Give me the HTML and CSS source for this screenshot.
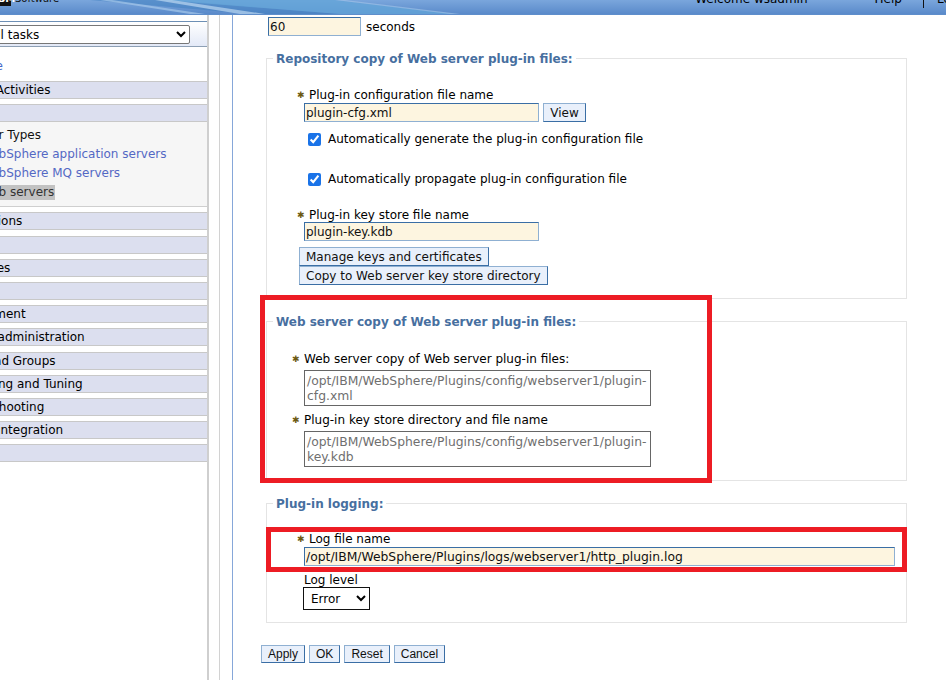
FILE: index.html
```html
<!DOCTYPE html>
<html lang="en">
<head>
<meta charset="utf-8">
<title>Web server plug-in properties</title>
<link rel="stylesheet" href="styles.css">
</head>
<body>
<header class="banner">
  <svg class="sweep" viewBox="0 0 946 15" preserveAspectRatio="none" aria-hidden="true">
    <polygon points="90,0 170,0 340,15 250,15" fill="#3f7fc0" opacity=".55"/>
    <polygon points="160,0 335,0 455,15 340,15" fill="#63a6d8" opacity=".75"/>
    <polygon points="100,0 112,0 205,15 190,15" fill="#a5c8ea" opacity=".7"/>
    <polygon points="155,0 172,0 265,15 240,15" fill="#b4d2ee" opacity=".75"/>
    <polygon points="335,0 345,0 460,15 450,15" fill="#a5c6ea" opacity=".6"/>
  </svg>
  <div class="brand"><span class="logo">IBM</span><span class="product">Software</span></div>
  <div class="user"><span class="welcome">Welcome wsadmin</span><span class="help">Help</span><span class="sep"></span><span class="logout">Logout</span></div>
</header>
<div class="page">
  <nav class="side">
    <div class="viewbar">
      <select class="taskselect"><option>All tasks</option></select>
    </div>
    <a class="welcome-link" href="#">Welcome</a>
    <div class="navrows">
      <div class="navrow">Guided Activities</div>
      <div class="navrow navrow-open">Servers</div>
      <div class="subnav">
        <div class="subhead">Server Types</div>
        <a href="#">WebSphere application servers</a>
        <a href="#">WebSphere MQ servers</a>
        <a href="#" class="current"><span>Web servers</span></a>
      </div>
      <div class="navrow">Applications</div>
      <div class="navrow">Services</div>
      <div class="navrow">Resources</div>
      <div class="navrow">Security</div>
      <div class="navrow">Environment</div>
      <div class="navrow">System administration</div>
      <div class="navrow">Users and Groups</div>
      <div class="navrow">Monitoring and Tuning</div>
      <div class="navrow">Troubleshooting</div>
      <div class="navrow">Service integration</div>
      <div class="navrow">UDDI</div>
    </div>
  </nav>
  <div class="rail"></div>
  <main class="content">
    <div class="timeout"><input class="field short" value="60"> <span>seconds</span></div>

    <fieldset class="group first">
      <legend>Repository copy of Web server plug-in files:</legend>
      <div class="label req">Plug-in configuration file name</div>
      <div class="inline"><input class="field wide" value="plugin-cfg.xml"><button class="btn view">View</button></div>
      <label class="check"><input type="checkbox" checked>Automatically generate the plug-in configuration file</label>
      <label class="check second"><input type="checkbox" checked>Automatically propagate plug-in configuration file</label>
      <div class="label req keylabel">Plug-in key store file name</div>
      <input class="field wide keyfield" value="plugin-key.kdb">
      <div class="stack">
        <button class="btn">Manage keys and certificates</button>
        <button class="btn">Copy to Web server key store directory</button>
      </div>
    </fieldset>

    <fieldset class="group webcopy">
      <legend>Web server copy of Web server plug-in files:</legend>
      <div class="label req">Web server copy of Web server plug-in files:</div>
      <div class="readonly">/opt/IBM/WebSphere/Plugins/config/webserver1/plugin-cfg.xml</div>
      <div class="label req rolabel">Plug-in key store directory and file name</div>
      <div class="readonly">/opt/IBM/WebSphere/Plugins/config/webserver1/plugin-key.kdb</div>
    </fieldset>

    <fieldset class="group logging">
      <legend>Plug-in logging:</legend>
      <div class="label req">Log file name</div>
      <input class="field full" value="/opt/IBM/WebSphere/Plugins/logs/webserver1/http_plugin.log">
      <div class="label levellabel">Log level</div>
      <select class="level"><option>Error</option></select>
    </fieldset>

    <div class="actions">
      <button class="btn">Apply</button>
      <button class="btn">OK</button>
      <button class="btn">Reset</button>
      <button class="btn">Cancel</button>
    </div>
  </main>
</div>
<div class="mark mark-copy"></div>
<div class="mark mark-log"></div>
</body>
</html>
```
FILE: styles.css
```css
* { box-sizing: border-box; }
html, body { height: 100%; }
body {
  margin: 0;
  overflow: hidden;
  background: #fff;
  color: #000;
  font: 12px "DejaVu Sans", sans-serif;
  position: relative;
}
.banner {
  height: 15px;
  position: relative;
  overflow: hidden;
  display: flex;
  justify-content: space-between;
  background: linear-gradient(#7aa6dc, #5a8aca);
  border-bottom: 1px solid #5f8ecb;
}
.sweep { position: absolute; inset: 0; width: 100%; height: 100%; }
.brand, .user {
  position: relative;
  display: flex;
  align-items: flex-end;
  height: 6px;
  line-height: 14px;
  white-space: nowrap;
}
.brand { margin-left: -8px; font-size: 10px; }
.logo {
  background: #111;
  color: #fff;
  font-weight: bold;
  width: 19px;
  height: 14px;
  flex: none;
  margin-right: 4px;
  padding-left: 2px;
}
.product { color: #111; }
.user { margin-right: -32px; }
.welcome { margin-right: 67px; }
.help { margin-right: 21px; }
.sep { width: 1px; height: 8px; background: #111; margin-right: 13px; margin-bottom: -2px; }
.page { display: flex; height: 665px; }
.side {
  width: 209px;
  flex: none;
  border-right: 2px solid #cfcfcf;
  overflow: hidden;
}
.viewbar {
  height: 26px;
  margin-top: 6px;
  border-top: 1px solid #6d8fb5;
  border-bottom: 1px solid #8ea0b5;
  background: linear-gradient(#fff, #e3e9f7);
  padding-top: 3px;
}
.taskselect {
  display: block;
  width: 210px;
  height: 19px;
  margin-left: -20px;
  padding: 0 0 0 4px;
  font: 12px "DejaVu Sans", sans-serif;
  background: #fff;
  border: 1px solid #777;
  border-radius: 2px;
}
.welcome-link {
  display: block;
  margin-left: -52px;
  height: 34px;
  padding-top: 12px;
  line-height: 15px;
  color: #4468c9;
  text-decoration: none;
}
.navrows { display: flex; flex-direction: column; gap: 5.2px; }
.navrow {
  height: 18px;
  margin-left: -51px;
  line-height: 16px;
  white-space: nowrap;
  background: #dcdfef;
  border-top: 1px solid #c8c8c8;
  border-bottom: 1px solid #c8c8c8;
}
.subnav {
  margin-top: -5.2px;
  height: 85px;
  padding-top: 4px;
  background: #f6f6f6;
  border-bottom: 1px solid #cfcfcf;
  display: flex;
  flex-direction: column;
  align-items: flex-start;
}
.subnav a, .subhead {
  height: 19px;
  line-height: 19px;
  white-space: nowrap;
  margin-left: -20px;
  text-decoration: none;
  color: #5468c4;
}
.subhead { margin-left: -36px; color: #111; }
.subnav .current { color: #333; }
.current span { background: #c2c2c2; display: block; height: 15px; line-height: 15px; margin-top: 2px; padding-right: 1px; }
.rail {
  width: 23px;
  flex: none;
  margin-left: 1px;
  border-right: 1px solid #86a7d9;
  position: relative;
}
.rail::before {
  content: "";
  position: absolute;
  left: 9px;
  top: 0;
  bottom: 0;
  width: 1px;
  background: #d2d2d2;
}
.content { width: 675px; flex: none; padding: 1px 0 0 33px; }
.timeout { height: 21px; padding-left: 2px; display: flex; align-items: center; gap: 5px; }
.field {
  height: 19px;
  padding: 0 1px;
  font: 12px "DejaVu Sans", sans-serif;
  color: #111;
  background: #fdf5e0;
  border: 1px solid;
  border-color: #3a6ea5 #8fb0d2 #8fb0d2 #3a6ea5;
  display: block;
}
.short { width: 93px; }
.wide { width: 235px; }
.keyfield { margin-top: -1px; }
.full { width: 591px; font-size: 12.35px; }
.group {
  margin: 0;
  padding: 0;
  width: 641px;
  border: 1px solid #e4e4e4;
  min-width: 0;
}
.group legend {
  margin-left: -31px;
  padding: 2px 3px 0;
  font-size: 12px;
  font-weight: bold;
  color: #476f9f;
  line-height: 15px;
}
.first { height: 249px; margin-top: 13px; padding: 21px 0 0 37px; }
.webcopy { height: 168px; margin-top: 14px; padding: 22px 0 0 37px; }
.logging { height: 128px; margin-top: 14px; padding: 20px 0 0 37px; }
.label { line-height: 15px; white-space: nowrap; }
.req { position: relative; }
.req::before {
  content: "\2731";
  position: absolute;
  left: -12px;
  top: 0;
  color: #6d5a12;
  font-size: 9px;
}
.first .label, .logging .label { padding-left: 5px; }
.first .req::before, .logging .req::before { left: -7px; }
.logging .levellabel { padding-left: 0; margin-top: 7px; }
.inline { display: flex; align-items: center; gap: 4px; }
.view { width: 43px; }
.btn {
  height: 19px;
  padding: 0 6px;
  font: 12px "DejaVu Sans", sans-serif;
  color: #111;
  background: #e9f0fb;
  border: 1px solid;
  border-color: #8fb0d2 #3a6ea5 #3a6ea5 #8fb0d2;
  white-space: nowrap;
}
.check {
  display: flex;
  align-items: center;
  height: 20px;
  margin-left: 4px;
  margin-top: 7px;
}
.check input { width: 13px; height: 13px; margin: 0 7px 0 0; accent-color: #1a73e8; }
.check.second { margin-top: 20px; }
.keylabel { margin-top: 19px; }
.stack { display: flex; flex-direction: column; align-items: flex-start; margin-top: 6px; margin-left: -5px; }
.readonly {
  width: 347px;
  height: 36px;
  margin-top: 3px;
  padding: 3px 0 0 2px;
  border: 1px solid #666;
  color: #6f6f6f;
  font-size: 12.35px;
  line-height: 15px;
  overflow-wrap: anywhere;
}
.rolabel { margin-top: 7px; }
.level {
  display: block;
  width: 67px;
  height: 23px;
  margin-top: -1px;
  margin-left: -1px;
  padding-left: 3px;
  font: 12px "DejaVu Sans", sans-serif;
  background: #fff;
  border: 1px solid #111;
  border-radius: 0;
}
.actions { display: flex; gap: 4px; margin-top: 22px; margin-left: -5px; }
.actions .btn { height: 18px; padding: 0 6px; font: 12px "Liberation Sans", sans-serif; }
.mark { position: absolute; border: 5px solid #ed1c24; pointer-events: none; }
.mark-copy { left: 260px; top: 295px; width: 452px; height: 188px; }
.mark-log { left: 266px; top: 527px; width: 641px; height: 45px; }
```
